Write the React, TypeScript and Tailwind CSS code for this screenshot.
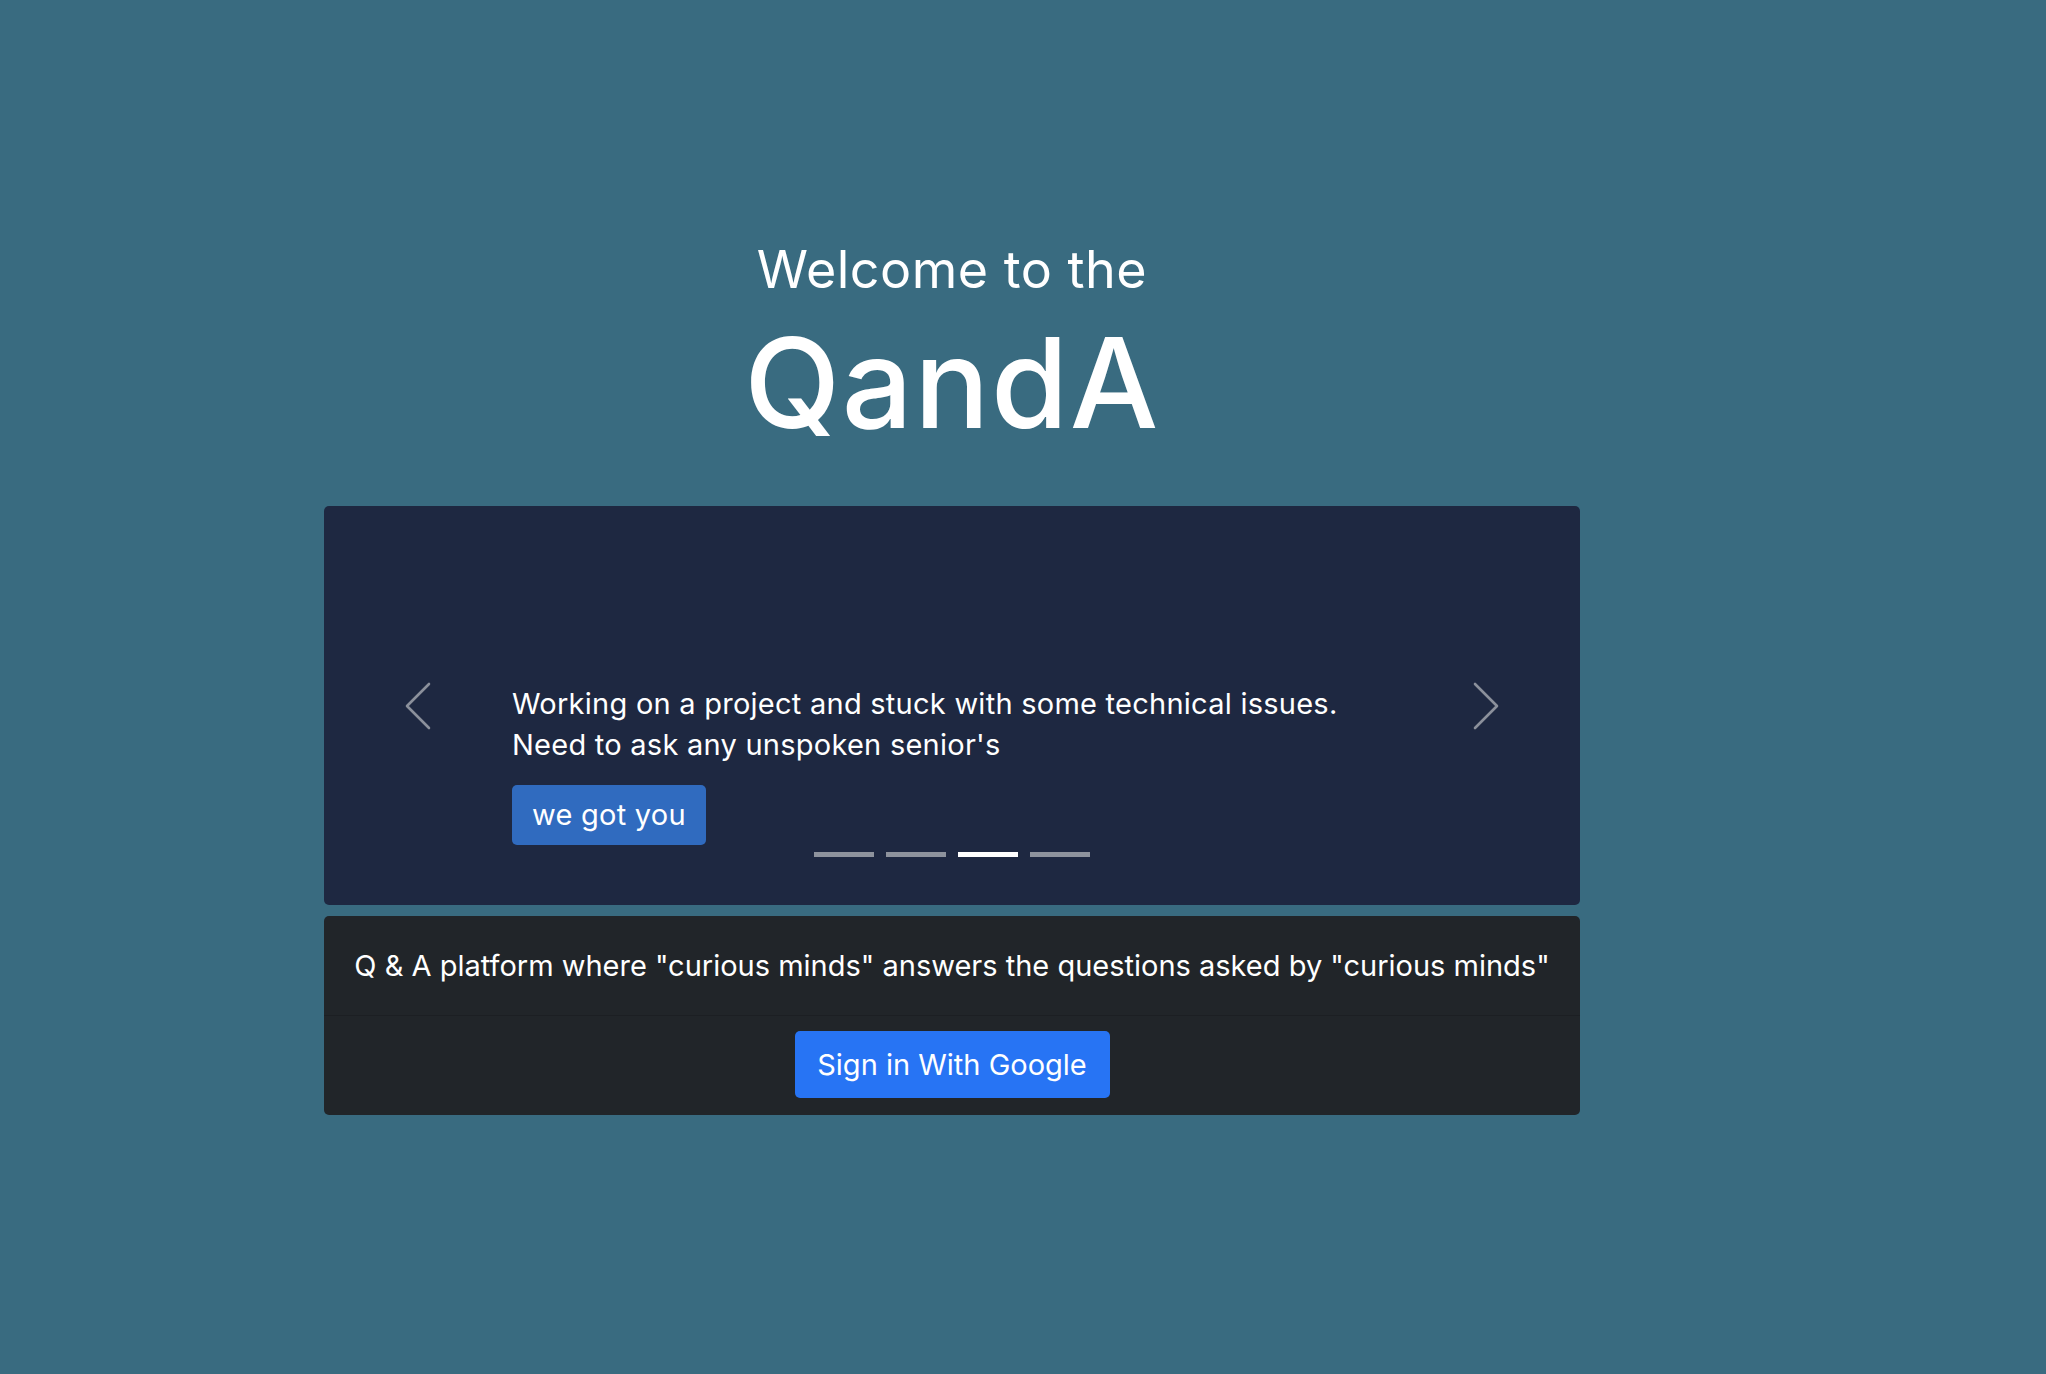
import React from "react";

const font = { fontFamily: "Inter, 'Open Sans', sans-serif" };

function Chevron({ dir }: { dir: "left" | "right" }) {
  return (
    <svg width="28" height="48" viewBox="0 0 28 48" fill="none">
      <polyline
        points={dir === "left" ? "25,2 3,24 25,46" : "3,2 25,24 3,46"}
        stroke="#8b909b"
        strokeWidth="2.6"
        strokeLinecap="round"
        strokeLinejoin="round"
      />
    </svg>
  );
}

export default function App() {
  return (
    <div className="w-full min-h-[1374px] bg-[#396b80] text-white" style={font}>
      <div className="ml-[324px] w-[1256px] pt-[240px]">
        <div className="flex flex-col items-center">
          <h2 className="text-[52px] leading-[60px] font-normal tracking-[0.5px]">Welcome to the</h2>
          <h1 className="mt-[18px] text-[125px] leading-[130px] font-medium tracking-[1.5px]">QandA</h1>
        </div>

        <div className="mt-[58px] h-[399px] rounded-[5px] bg-[#1e2841] grid grid-cols-[188px_1fr_188px]">
          <div className="flex items-center justify-center">
            <Chevron dir="left" />
          </div>
          <div className="pt-[177px] flex flex-col">
            <p className="text-[29px] leading-[41px] tracking-[0.25px]">
              Working on a project and stuck with some technical issues.
              <br />
              Need to ask any unspoken senior's
            </p>
            <div className="mt-[20px]">
              <button className="h-[60px] px-[20px] rounded-[5px] bg-[#306bbf] text-[29px] tracking-[0.25px]">we got you</button>
            </div>
            <div className="mt-[7px] flex justify-center gap-[12px]">
              <span className="w-[60px] h-[5px] bg-[#8e939d]" />
              <span className="w-[60px] h-[5px] bg-[#8e939d]" />
              <span className="w-[60px] h-[5px] bg-white" />
              <span className="w-[60px] h-[5px] bg-[#8e939d]" />
            </div>
          </div>
          <div className="flex items-center justify-center">
            <Chevron dir="right" />
          </div>
        </div>

        <div className="mt-[11px] rounded-[5px] bg-[#212529] overflow-hidden">
          <div className="h-[100px] flex items-center justify-center border-b border-[#1c1f23]">
            <p className="text-[29px] whitespace-nowrap">
              Q &amp; A platform where "curious minds" answers the questions asked by "curious minds"
            </p>
          </div>
          <div className="h-[99px] flex items-start justify-center pt-[15px]">
            <button className="h-[67px] w-[315px] rounded-[5px] bg-[#2774f4] text-[29px]">Sign in With Google</button>
          </div>
        </div>
      </div>
    </div>
  );
}
